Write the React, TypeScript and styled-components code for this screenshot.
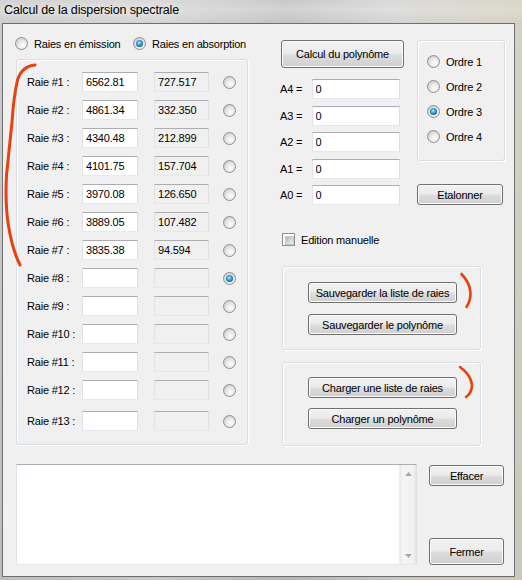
import React from "react";
import styled, { createGlobalStyle, css } from "styled-components";

const Global = createGlobalStyle`
  html, body { margin: 0; padding: 0; background: #c6c6c6; }
  body {
    width: 522px; height: 580px; overflow: hidden;
    font-family: "Liberation Sans", Arial, sans-serif; font-size: 11px; color: #000;
    letter-spacing: -0.2px;
  }
  * { box-sizing: border-box; }
`;

const Window = styled.div`
  position: relative;
  width: 522px;
  height: 580px;
  display: flex;
  flex-direction: column;
  padding: 0 7px 3px 2px;
  background:
    linear-gradient(90deg, rgba(255,255,255,0) 0%, rgba(255,255,255,0.18) 30%, rgba(0,0,0,0.04) 55%, rgba(255,255,255,0.15) 75%, rgba(230,220,180,0.35) 100%),
    linear-gradient(180deg, #d2d2d2 0px, #dadada 10px, #cbcbcb 23px, #bdbdbd 100%);
`;

const TitleBar = styled.div`
  height: 23px;
  display: flex;
  align-items: flex-start;
  padding: 3px 0 0 2px;
  font-family: "Liberation Sans", Arial, sans-serif;
  font-size: 12.5px;
  letter-spacing: -0.15px;
  color: #000;
  text-shadow: 0 0 6px rgba(255, 255, 255, 0.7);
`;

const Client = styled.div`
  flex: 1;
  border: 1px solid #6e6e6e;
  background: #f0f0f0;
  display: flex;
  flex-direction: column;
  padding: 13px 0 0 12px;
`;

const TopArea = styled.div`
  display: flex;
  align-items: flex-start;
`;

const LeftCol = styled.div`
  width: 234px;
  display: flex;
  flex-direction: column;
`;

const RadioRow = styled.div`
  height: 13px;
  display: flex;
  align-items: center;
`;

const Option = styled.label<{ $width?: number; $height?: number }>`
  display: flex;
  align-items: center;
  gap: 6px;
  ${(p) => p.$width && css`width: ${p.$width}px;`}
  ${(p) => p.$height && css`height: ${p.$height}px;`}
  white-space: nowrap;
`;

const RadioCircle = styled.span<{ $checked?: boolean }>`
  position: relative;
  flex: none;
  width: 13px;
  height: 13px;
  border-radius: 50%;
  border: 1px solid #8f8f8f;
  background: radial-gradient(circle at 60% 65%, #fdfdfd 0%, #eaeaea 40%, #c9c9c9 85%, #b9b9b9 100%);
  ${(p) =>
    p.$checked &&
    css`
      &::after {
        content: "";
        position: absolute;
        left: 2px;
        top: 2px;
        width: 7px;
        height: 7px;
        border-radius: 50%;
        background: radial-gradient(circle at 45% 40%, #b8ecff 0%, #3fa8e4 35%, #125d92 75%, #0b3f66 100%);
      }
    `}
`;

const GroupBox = styled.div<{ $w: number; $h: number }>`
  width: ${(p) => p.$w}px;
  height: ${(p) => p.$h}px;
  border: 1px solid #d5dfe5;
  border-radius: 3px;
  box-shadow: inset 1px 1px 0 #ffffff, 1px 1px 0 #ffffff;
`;

const RaieGroup = styled(GroupBox)`
  margin: 9px 0 0 1px;
  padding: 8px 0 0 10px;
  display: flex;
  flex-direction: column;
`;

const RaieRow = styled.div<{ $extra?: number }>`
  height: 28px;
  display: flex;
  align-items: center;
  margin-top: ${(p) => p.$extra ?? 0}px;
`;

const RaieLabel = styled.span`
  width: 55px;
  white-space: nowrap;
`;

const TextInput = styled.input<{ $w: number; $gap?: number; $ro?: boolean }>`
  width: ${(p) => p.$w}px;
  height: 20px;
  margin: 0 ${(p) => p.$gap ?? 0}px 0 0;
  padding: 0 0 0 3px;
  border: 1px solid;
  border-color: #abadb3 #dbdfe6 #e3e9ef #e2e3ea;
  background: ${(p) => (p.$ro ? "#f0f0f0" : "#ffffff")};
  font-family: "Liberation Sans", Arial, sans-serif;
  font-size: 11px;
  letter-spacing: -0.2px;
  color: #000;
  outline: none;
`;

const RightCol = styled.div`
  margin-left: 31px;
  width: 224px;
  display: flex;
  flex-direction: column;
`;

const TopRight = styled.div`
  display: flex;
  align-items: flex-start;
`;

const PolyCol = styled.div`
  width: 124px;
  display: flex;
  flex-direction: column;
`;

const Button = styled.button<{ $w: number; $h: number }>`
  width: ${(p) => p.$w}px;
  height: ${(p) => p.$h}px;
  flex: none;
  padding: 0;
  border: 1px solid #707070;
  border-radius: 3px;
  background: linear-gradient(180deg, #f2f2f2 0%, #ebebeb 48%, #dddddd 52%, #cfcfcf 100%);
  box-shadow: inset 0 0 0 1px #fbfbfb;
  font-family: "Liberation Sans", Arial, sans-serif;
  font-size: 11px;
  letter-spacing: -0.2px;
  color: #000;
  white-space: nowrap;
`;

const CalcButton = styled(Button)`
  margin: 3px 0 0 1px;
`;

const AList = styled.div`
  margin-top: 11px;
  display: flex;
  flex-direction: column;
  gap: 6.5px;
`;

const ARow = styled.div`
  display: flex;
  align-items: center;
`;

const ALabel = styled.span`
  width: 31.5px;
`;

const OrdreCol = styled.div`
  margin-left: 13px;
  display: flex;
  flex-direction: column;
`;

const OrdreGroup = styled(GroupBox)`
  margin-top: 3px;
  padding: 8px 0 0 9px;
  display: flex;
  flex-direction: column;
`;

const EtalonnerButton = styled(Button)`
  margin-top: 23px;
`;

const CheckRow = styled.label`
  margin: 28px 0 0 2px;
  height: 13px;
  display: flex;
  align-items: center;
  gap: 6px;
`;

const CheckBox = styled.span`
  width: 13px;
  height: 13px;
  border: 1px solid #8e8f8f;
  background: #fff;
  padding: 2px;
  &::before {
    content: "";
    display: block;
    width: 100%;
    height: 100%;
    background: linear-gradient(135deg, #aeb3b9 0%, #d3d6da 50%, #ececec 100%);
    border: 1px solid #c6c9ce;
  }
`;

const ButtonGroup = styled(GroupBox)<{ $top: number; $pad: number; $gap: number }>`
  margin: ${(p) => p.$top}px 0 0 2px;
  padding: ${(p) => p.$pad}px 0 0 25px;
  display: flex;
  flex-direction: column;
  gap: ${(p) => p.$gap}px;
`;

const BottomArea = styled.div`
  margin-top: 18px;
  display: flex;
  align-items: flex-start;
`;

const LogBox = styled.div`
  margin-left: 1px;
  width: 401px;
  height: 101px;
  border: 1px solid;
  border-color: #abadb3 #dbdfe6 #e3e9ef #e2e3ea;
  background: #fff;
  display: flex;
  justify-content: flex-end;
`;

const ScrollBar = styled.div`
  width: 17px;
  height: 100%;
  background: linear-gradient(90deg, #e6e6e6 0%, #f4f4f4 15%, #f1f1f1 85%, #e3e3e3 100%);
  border-left: 1px solid #eeeeee;
  display: flex;
  flex-direction: column;
  justify-content: space-between;
  align-items: center;
  padding: 7px 0 6px;
`;

const SideButtons = styled.div`
  margin-left: 12px;
  height: 101px;
  display: flex;
  flex-direction: column;
  justify-content: space-between;
  padding-top: 1px;
`;

const Annotations = styled.svg`
  position: absolute;
  left: 0;
  top: 0;
  width: 522px;
  height: 580px;
  pointer-events: none;
`;

const Arrow = ({ up }: { up?: boolean }) => (
  <svg width="7" height="4" viewBox="0 0 7 4">
    <polygon points={up ? "0,4 3.5,0 7,4" : "0,0 7,0 3.5,4"} fill="#a8a8a8" />
  </svg>
);

const raies: [string, string][] = [
  ["6562.81", "727.517"],
  ["4861.34", "332.350"],
  ["4340.48", "212.899"],
  ["4101.75", "157.704"],
  ["3970.08", "126.650"],
  ["3889.05", "107.482"],
  ["3835.38", "94.594"],
  ["", ""],
  ["", ""],
  ["", ""],
  ["", ""],
  ["", ""],
  ["", ""],
];

export default function App() {
  return (
    <>
      <Global />
      <Window>
        <TitleBar>Calcul de la dispersion spectrale</TitleBar>
        <Client>
          <TopArea>
            <LeftCol>
              <RadioRow>
                <Option $width={118}>
                  <RadioCircle />
                  Raies en émission
                </Option>
                <Option>
                  <RadioCircle $checked />
                  Raies en absorption
                </Option>
              </RadioRow>
              <RaieGroup $w={232} $h={386}>
                {raies.map(([a, b], i) => (
                  <RaieRow key={i} $extra={i === 12 ? 3 : 0}>
                    <RaieLabel>Raie #{i + 1} :</RaieLabel>
                    <TextInput $w={56} $gap={16} defaultValue={a} />
                    <TextInput $w={55} $gap={14} $ro readOnly defaultValue={b} />
                    <RadioCircle $checked={i === 7} />
                  </RaieRow>
                ))}
              </RaieGroup>
            </LeftCol>
            <RightCol>
              <TopRight>
                <PolyCol>
                  <CalcButton $w={123} $h={28}>Calcul du polynôme</CalcButton>
                  <AList>
                    {["A4", "A3", "A2", "A1", "A0"].map((n) => (
                      <ARow key={n}>
                        <ALabel>{n} =</ALabel>
                        <TextInput $w={88} defaultValue="0" />
                      </ARow>
                    ))}
                  </AList>
                </PolyCol>
                <OrdreCol>
                  <OrdreGroup $w={88} $h={121}>
                    {[1, 2, 3, 4].map((o) => (
                      <Option key={o} $height={25}>
                        <RadioCircle $checked={o === 3} />
                        Ordre {o}
                      </Option>
                    ))}
                  </OrdreGroup>
                  <EtalonnerButton $w={86} $h={21}>Etalonner</EtalonnerButton>
                </OrdreCol>
              </TopRight>
              <CheckRow>
                <CheckBox />
                Edition manuelle
              </CheckRow>
              <ButtonGroup $w={199} $h={84} $top={20} $pad={15} $gap={11}>
                <Button $w={149} $h={21}>Sauvegarder la liste de raies</Button>
                <Button $w={149} $h={21}>Sauvegarder le polynôme</Button>
              </ButtonGroup>
              <ButtonGroup $w={199} $h={84} $top={12} $pad={14} $gap={10}>
                <Button $w={149} $h={21}>Charger une liste de raies</Button>
                <Button $w={149} $h={21}>Charger un polynôme</Button>
              </ButtonGroup>
            </RightCol>
          </TopArea>
          <BottomArea>
            <LogBox>
              <ScrollBar>
                <Arrow up />
                <Arrow />
              </ScrollBar>
            </LogBox>
            <SideButtons>
              <Button $w={75} $h={21}>Effacer</Button>
              <Button $w={75} $h={27}>Fermer</Button>
            </SideButtons>
          </BottomArea>
        </Client>
        <Annotations viewBox="0 0 522 580">
          <g fill="none" stroke="#e8420e" strokeLinecap="round" strokeLinejoin="round">
            <path
              strokeWidth="3"
              d="M35 65 Q22 66 17.5 80 Q13.5 98 12 122 Q9 150 6.5 175 Q5 205 8.5 226 Q12.5 250 20 265"
            />
            <path strokeWidth="2.6" d="M461.5 274 Q470 283 470.5 293 Q470.5 301 466.5 307" />
            <path strokeWidth="2.6" d="M460 367 Q471 375 472 385 Q472 393 466 397" />
          </g>
        </Annotations>
      </Window>
    </>
  );
}
